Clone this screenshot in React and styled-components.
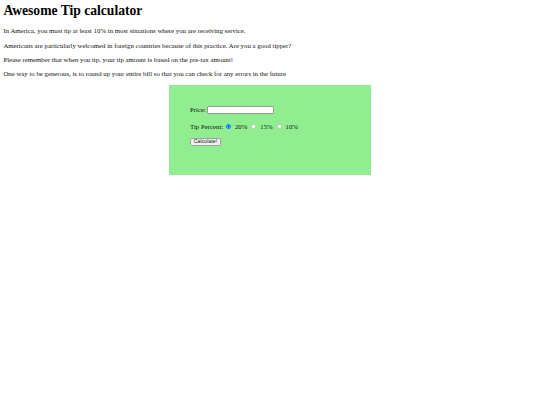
import React from "react";
import styled, { createGlobalStyle } from "styled-components";

const Global = createGlobalStyle`
  html, body { background: #fff; }
  body {
    margin: 3.4px;
    font-family: "Liberation Serif", "Times New Roman", serif;
    color: #000;
  }
`;

const Title = styled.h1`
  font-size: 13.6px;
  font-weight: bold;
  margin: 0 0 8.5px;
  line-height: 15.6px;
`;

const Para = styled.p`
  font-size: 6.8px;
  margin: 6.3px 0;
  line-height: 8px;
  color: #111;
`;

const Card = styled.div`
  width: 202px;
  height: 90px;
  box-sizing: border-box;
  margin: 0 auto;
  background: #90ee90;
  padding: 20.5px 21px 0;
`;

const Form = styled.form`
  display: flex;
  flex-direction: column;
  align-items: flex-start;
  font-size: 6.8px;
  color: #111;
`;

const Row = styled.div`
  display: flex;
  align-items: center;
  height: 9px;
  margin-bottom: ${(p) => p.$after || 0}px;
`;

const Label = styled.span`
  margin-right: ${(p) => p.$gap || 0}px;
`;

const TextInput = styled.input`
  width: 67px;
  height: 8px;
  box-sizing: border-box;
  border: 0.5px solid #9a9a9a;
  border-radius: 1px;
  background: #fff;
  padding: 0;
  margin: 0;
  font-size: 5px;
`;

const Radio = styled.input`
  appearance: none;
  -webkit-appearance: none;
  width: 5px;
  height: 5px;
  box-sizing: border-box;
  border-radius: 50%;
  border: 0.5px solid #c4c4c4;
  background: #fff;
  margin: 0 4px 0 ${(p) => p.$left || 3.8}px;
  &:checked {
    border-color: #0075ff;
    background: radial-gradient(circle, #0075ff 0 1.1px, #e6f0ff 1.2px 1.7px, #0075ff 1.8px);
  }
`;

const Button = styled.button`
  font-family: "Liberation Sans", Arial, sans-serif;
  font-size: 5.3px;
  padding: 0;
  width: 31px;
  height: 7.5px;
  box-sizing: border-box;
  line-height: 1;
  border: 0.5px solid #a0a0a0;
  border-radius: 1.3px;
  background: #efefef;
  color: #222;
  margin: 0;
`;

export default function App() {
  return (
    <>
      <Global />
      <Title>Awesome Tip calculator</Title>
      <Para>In America, you must tip at least 10% in most situations where you are receiving service.</Para>
      <Para>Americans are particularly welcomed in foreign countries because of this practice. Are you a good tipper?</Para>
      <Para>Please remember that when you tip, your tip amount is based on the pre-tax amount!</Para>
      <Para>One way to be generous, is to round up your entire bill so that you can check for any errors in the future</Para>
      <Card>
        <Form onSubmit={(e) => e.preventDefault()}>
          <Row $after={8}>
            <Label $gap={1.5}>Price:</Label>
            <TextInput type="text" />
          </Row>
          <Row $after={7.2}>
            <Label>Tip Percent:</Label>
            <Radio type="radio" name="tip" $left={2.8} defaultChecked />
            <span>20%</span>
            <Radio type="radio" name="tip" />
            <span>15%</span>
            <Radio type="radio" name="tip" />
            <span>10%</span>
          </Row>
          <Button type="button">Calculate!</Button>
        </Form>
      </Card>
    </>
  );
}
